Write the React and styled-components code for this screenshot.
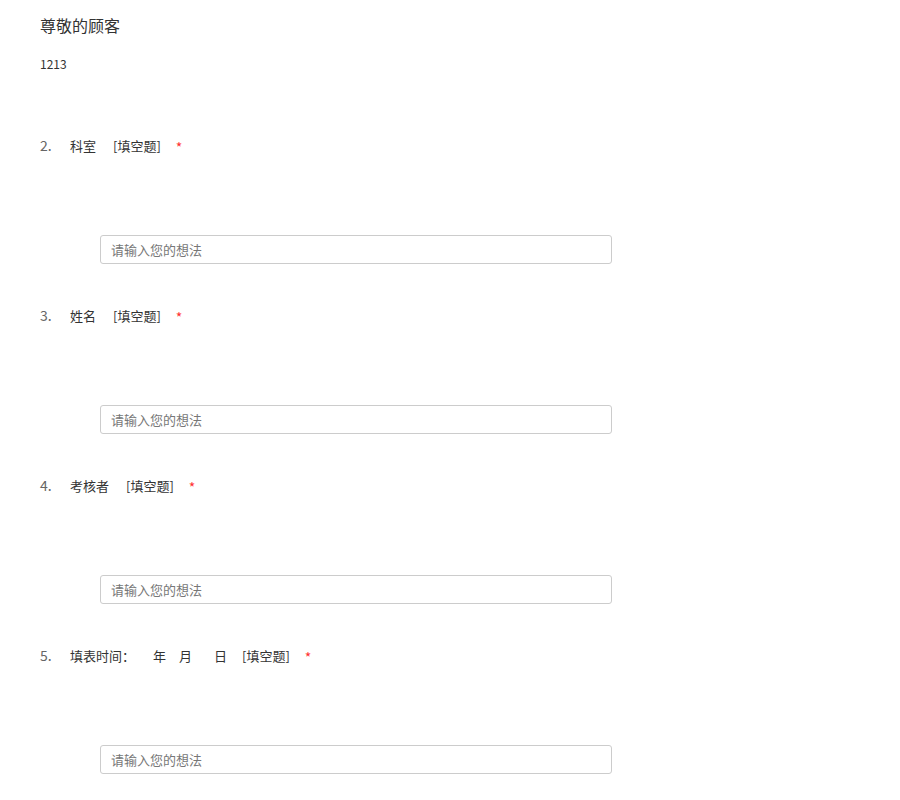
import React from "react";
import styled, { createGlobalStyle } from "styled-components";

const GlobalStyle = createGlobalStyle`
  body {
    margin: 0;
    background: #fff;
    font-family: "Noto Sans CJK SC", "Liberation Sans", sans-serif;
  }
`;

const Page = styled.div`
  padding: 14px 0 40px 40px;
`;

const SurveyTitle = styled.div`
  font-size: 16px;
  line-height: 22px;
  color: #333;
`;

const Description = styled.div`
  margin-top: 20px;
  font-size: 12px;
  line-height: 16px;
  color: #333;
`;

const QuestionList = styled.div`
  margin-top: 63px;
  display: flex;
  flex-direction: column;
  gap: 41px;
`;

const Question = styled.div`
  display: flex;
  flex-direction: column;
`;

const TitleRow = styled.div`
  display: flex;
  align-items: center;
  height: 20px;
  font-size: 13px;
  color: #333;
`;

const Number = styled.span`
  width: 30px;
  font-size: 14px;
  color: #666;
`;

const Spacer = styled.span`
  display: inline-block;
  width: ${p => p.$w}px;
`;

const Tag = styled.span`
  margin-left: ${p => p.$gap || 17}px;
`;

const Required = styled.span`
  margin-left: 15px;
  color: #f33;
  font-size: 14px;
  transform: translateY(2px);
`;

const Input = styled.input`
  box-sizing: border-box;
  margin: 80px 0 0 60px;
  width: 512px;
  height: 29px;
  padding: 0 10px;
  border: 1px solid #ccc;
  border-radius: 3px;
  font-family: inherit;
  font-size: 13px;
  color: #333;
  outline: none;
  &::placeholder {
    color: #777;
  }
`;

const questions = [
  { no: 2, title: ["科室"] },
  { no: 3, title: ["姓名"] },
  { no: 4, title: ["考核者"] },
  { no: 5, title: ["填表时间：", 18, "年", 13, "月", 22, "日"], gap: 15 },
];

export default function App() {
  return (
    <Page>
      <GlobalStyle />
      <SurveyTitle>尊敬的顾客</SurveyTitle>
      <Description>1213</Description>
      <QuestionList>
        {questions.map(q => (
          <Question key={q.no}>
            <TitleRow>
              <Number>{q.no}.</Number>
              {q.title.map((part, i) =>
                typeof part === "number" ? (
                  <Spacer key={i} $w={part} />
                ) : (
                  <span key={i}>{part}</span>
                )
              )}
              <Tag $gap={q.gap}>[填空题]</Tag>
              <Required>*</Required>
            </TitleRow>
            <Input placeholder="请输入您的想法" />
          </Question>
        ))}
      </QuestionList>
    </Page>
  );
}
